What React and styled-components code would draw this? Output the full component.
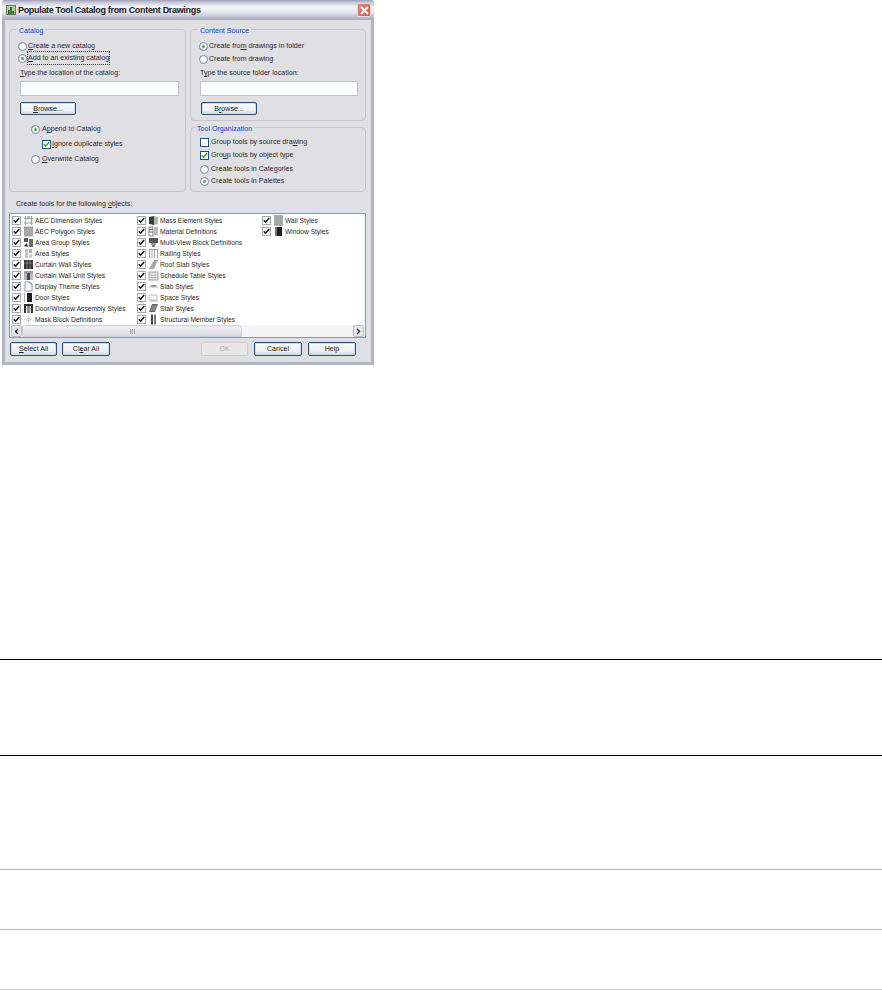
import React from 'react';
import styled, { createGlobalStyle } from 'styled-components';

const GlobalStyle = createGlobalStyle`
  html, body {
    margin: 0;
    padding: 0;
    background: #fff;
  }
`;

const Page = styled.div`
  width: 882px;
  height: 991px;
  overflow: hidden;
  font-family: "Liberation Sans", Arial, sans-serif;
`;

const Dialog = styled.div`
  width: 372px;
  height: 365px;
  margin-left: 2px;
  box-sizing: border-box;
  background: #e0dfe3;
  border: 3px solid #b4b4c8;
  border-top: 0;
  border-radius: 3px 3px 0 0;
  color: #2a2a2a;
  font-size: 7.1px;
  line-height: 12px;
  display: flex;
  flex-direction: column;
`;

const TitleBar = styled.div`
  height: 20px;
  margin: 0 -3px;
  padding: 0 3px 0 2px;
  flex: none;
  display: flex;
  align-items: center;
  gap: 2px;
  border-radius: 3px 3px 0 0;
  background: linear-gradient(#9c9cb8 0, #c4c4d6 10%, #f4f4f8 35%, #e4e4ec 62%, #c0c0d2 85%, #a8a8c0 100%);
`;

const TitleText = styled.span`
  flex: 1;
  font-size: 9px;
  font-weight: bold;
  letter-spacing: -0.32px;
  color: #1c1c1c;
`;

const CloseButton = styled.div`
  width: 14px;
  height: 14px;
  box-sizing: border-box;
  display: flex;
  align-items: center;
  justify-content: center;
  border-radius: 2px;
  border: 1px solid #ecd6d6;
  background: linear-gradient(135deg, #e08d82, #c9574c);
`;

const Body = styled.div`
  flex: 1;
  display: flex;
  flex-direction: column;
  padding: 9px 5px 0 4px;
`;

const Groups = styled.div`
  display: grid;
  grid-template-columns: 177px 176px;
  grid-template-rows: 92px 65px;
  column-gap: 4px;
  row-gap: 6px;
`;

const Group = styled.div`
  position: relative;
  box-sizing: border-box;
  grid-row: ${(p) => p.$span || 'auto'};
  padding: ${(p) => p.$top || 10}px 7px 0 ${(p) => p.$left || 8}px;
  border: 1px solid #c6c5cb;
  border-radius: 4px;
  display: flex;
  flex-direction: column;
`;

const Legend = styled.span`
  position: absolute;
  top: -4px;
  left: ${(p) => p.$left}px;
  padding: 0 2px;
  background: #e0dfe3;
  color: #0a46d8;
  line-height: 10px;
`;

const Option = styled.label`
  height: 12px;
  flex: none;
  display: flex;
  align-items: center;
  gap: ${(p) => p.$gap || 1}px;
  margin-top: ${(p) => p.$mt || 0}px;
  margin-left: ${(p) => p.$indent || 0}px;
`;

const Focused = styled.span`
  outline: 1px dotted #333;
`;

const Radio = styled.span`
  width: 9px;
  height: 9px;
  flex: none;
  box-sizing: border-box;
  border-radius: 50%;
  border: 1px solid #6b88a6;
  background: #fff;
  display: flex;
  align-items: center;
  justify-content: center;
  &::after {
    content: '';
    width: 3px;
    height: 3px;
    border-radius: 50%;
    background: ${(p) => (p.$on ? '#3fae3a' : 'transparent')};
  }
`;

const CheckBox = styled.span`
  width: 9px;
  height: 9px;
  flex: none;
  box-sizing: border-box;
  border: 1px solid ${(p) => (p.$plain ? '#a8a8a8' : '#24527e')};
  background: #fff;
  display: flex;
`;

const FieldLabel = styled.div`
  height: 12px;
  flex: none;
  margin-top: ${(p) => p.$mt || 0}px;
  margin-left: ${(p) => p.$indent || 0}px;
`;

const TextField = styled.div`
  height: 15px;
  flex: none;
  margin-top: 2px;
  margin-left: ${(p) => p.$indent || 0}px;
  margin-right: ${(p) => p.$right || 0}px;
  box-sizing: border-box;
  background: #fff;
  border: 1px solid #b9c3cd;
`;

const Button = styled.div`
  width: ${(p) => p.$w}px;
  height: ${(p) => p.$h || 14}px;
  flex: none;
  box-sizing: border-box;
  margin-top: ${(p) => p.$mt || 0}px;
  margin-left: ${(p) => p.$ml || 0}px;
  border: 1px solid ${(p) => (p.$off ? '#cfcdc8' : '#2a5078')};
  border-radius: 2px;
  background: ${(p) => (p.$off ? '#e8e7e6' : 'linear-gradient(#fbfbfd, #eeeef3 70%, #d2d2de)')};
  box-shadow: ${(p) => (p.$off ? 'none' : 'inset 0 0 0 1px #cfe0f0')};
  color: ${(p) => (p.$off ? '#b0afb0' : '#222')};
  display: flex;
  align-items: center;
  justify-content: center;
`;

const ListLabel = styled.div`
  height: 12px;
  margin: 6px 0 3px 7px;
  flex: none;
`;

const ListBox = styled.div`
  height: 125px;
  flex: none;
  box-sizing: border-box;
  background: #fff;
  border: 1px solid #7f9db9;
  display: flex;
  flex-direction: column;
`;

const Items = styled.div`
  flex: 1;
  display: grid;
  grid-auto-flow: column;
  grid-template-rows: repeat(10, 11px);
  grid-template-columns: repeat(3, 125px);
  padding: 1px 0 0 2px;
`;

const Item = styled.div`
  display: flex;
  align-items: center;
  height: 11px;
  white-space: nowrap;
  line-height: 11px;
  font-size: 6.7px;
`;

const ItemIcon = styled.svg`
  width: 11px;
  height: 11px;
  margin: 0 1px 0 2px;
  flex: none;
`;

const ScrollBar = styled.div`
  height: 12px;
  flex: none;
  margin: 0 1px;
  display: flex;
  background: #f5f5f7;
`;

const ScrollArrow = styled.div`
  width: 11px;
  flex: none;
  box-sizing: border-box;
  border: 1px solid #b8b8c8;
  border-radius: 2px;
  background: #e6e6ee;
  display: flex;
  align-items: center;
  justify-content: center;
`;

const ScrollThumb = styled.div`
  width: ${(p) => p.$w}px;
  flex: none;
  box-sizing: border-box;
  border: 1px solid #cfcfda;
  border-radius: 2px;
  background: linear-gradient(#f0f0f4, #dcdce4);
  display: flex;
  align-items: center;
  justify-content: center;
  gap: 1px;
`;

const ScrollSpace = styled.div`
  flex: 1;
`;

const Grip = styled.span`
  width: 1px;
  height: 5px;
  background: #9a9aa8;
`;

const Footer = styled.div`
  display: flex;
  justify-content: space-between;
  margin-top: 4px;
  padding: 0 10px 0 1px;
`;

const ButtonGroup = styled.div`
  display: flex;
  gap: ${(p) => p.$gap}px;
`;

const AppIcon = styled.svg`
  width: 10px;
  height: 10px;
  margin-left: 2px;
  flex: none;
`;

const RuleRow = styled.div`
  height: ${(p) => p.$h}px;
  box-sizing: border-box;
  border-top: 1px solid ${(p) => p.$color};
  margin-top: ${(p) => p.$mt || 0}px;
`;

const Tick = ({ color }) => (
  <svg width="7" height="7" viewBox="0 0 7 7">
    <path d="M0.8 3.2 L2.6 5.2 L6.2 1" fill="none" stroke={color} strokeWidth="1.5" />
  </svg>
);

const icons = {
  dim: (
    <>
      <path d="M1 3.5h9M2.5 1v9M8.5 1v9M1 8h9" stroke="#8a8a90" strokeWidth="0.8" fill="none" />
      <path d="M4 1h3v2H4z" fill="#b8b8be" />
    </>
  ),
  poly: <rect x="1.5" y="1" width="8" height="9" fill="#a8a8a8" stroke="#8a8a8a" strokeWidth="0.7" />,
  areaGroup: (
    <>
      <rect x="1" y="1" width="4" height="4" fill="#555" />
      <rect x="6" y="2" width="4" height="8" fill="#6b6b6b" />
      <path d="M1 9l3-3 1 4z" fill="#333" />
    </>
  ),
  area: (
    <>
      <rect x="2" y="1" width="3" height="9" fill="#c4c4c4" />
      <rect x="6" y="1" width="3" height="4" fill="#b0b0b0" />
      <rect x="6" y="6" width="3" height="4" fill="#d0d0d0" />
    </>
  ),
  wall: (
    <>
      <rect x="1" y="1" width="9" height="9" fill="#333" />
      <path d="M4 1v9M7 1v9M1 4h9" stroke="#aaa" strokeWidth="0.6" />
    </>
  ),
  wallUnit: (
    <>
      <rect x="1" y="1" width="9" height="3" fill="#a0a0a0" />
      <rect x="1" y="4" width="3" height="6" fill="#b4b4b4" />
      <rect x="4" y="3" width="3" height="7" fill="#4a4a4a" />
      <rect x="7" y="4" width="3" height="6" fill="#bcbcbc" />
    </>
  ),
  theme: (
    <>
      <path d="M2 1h5l2 2v7H2z" fill="#fff" stroke="#5a7fa8" strokeWidth="0.8" />
      <path d="M7 1v2h2" fill="none" stroke="#5a7fa8" strokeWidth="0.6" />
    </>
  ),
  door: (
    <>
      <path d="M1.5 1v9" stroke="#999" strokeWidth="0.8" />
      <rect x="4" y="1" width="5" height="9" fill="#1c1c1c" />
    </>
  ),
  assembly: (
    <>
      <path d="M1 1h9v9h-2V3H3v7H1z" fill="#2e2e2e" />
      <rect x="4" y="3" width="3" height="7" fill="#8a8a8a" />
    </>
  ),
  mask: (
    <>
      <circle cx="5.5" cy="5.5" r="2.5" fill="#dcdcdc" />
      <path d="M5.5 0v11M1 5.5h2M8 5.5h2" stroke="#b0b0b0" strokeWidth="0.7" strokeDasharray="1 1" />
    </>
  ),
  mass: (
    <>
      <path d="M1 2l5-1v9l-5-1z" fill="#3c3c3c" />
      <path d="M6 1l4 1v7l-4 1z" fill="#b4b4b4" />
    </>
  ),
  material: (
    <>
      <rect x="1" y="1" width="4" height="9" fill="none" stroke="#666" strokeWidth="0.8" />
      <path d="M6 2h4M6 4h4M6 6h4M6 8h4M1 3.5h4M1 6h4" stroke="#555" strokeWidth="0.8" />
    </>
  ),
  multi: (
    <>
      <rect x="1" y="1" width="9" height="5" fill="#555" />
      <rect x="3" y="6" width="5" height="2" fill="#999" />
      <rect x="4" y="8" width="3" height="2" fill="#777" />
    </>
  ),
  railing: <path d="M1 1.5h9M1.5 1v9M4 1v9M6.5 1v9M9.5 1v9" stroke="#999" strokeWidth="0.9" fill="none" />,
  roof: <path d="M1 10l5-9h4l-4 9z" fill="#a8a8a8" />,
  schedule: (
    <>
      <rect x="1" y="2" width="9" height="8" fill="#fff" stroke="#777" strokeWidth="0.7" />
      <path d="M1 5h9M4 2v8M7 2v8M1 7.5h9" stroke="#888" strokeWidth="0.6" />
    </>
  ),
  slab: (
    <>
      <path d="M1 5l5-1 4 1-5 1z" fill="#777" />
      <path d="M1 6h9" stroke="#aaa" strokeWidth="0.8" />
    </>
  ),
  space: (
    <>
      <path d="M1 3h8v5H1z" fill="#f4f4f4" stroke="#aaa" strokeWidth="0.7" />
      <path d="M2 9h8" stroke="#999" strokeWidth="0.7" />
    </>
  ),
  stair: (
    <>
      <path d="M1 9l3-8h6l-3 8z" fill="#666" />
      <path d="M2 7h6M3 5h6M3.5 3h6" stroke="#ccc" strokeWidth="0.6" />
    </>
  ),
  member: (
    <>
      <rect x="3" y="0.5" width="2" height="10" fill="#444" />
      <rect x="6" y="0.5" width="2" height="10" fill="#777" />
    </>
  ),
  wallStyle: <rect x="1.5" y="0.5" width="8" height="10" fill="#a6a6a6" stroke="#888" strokeWidth="0.5" />,
  windowStyle: (
    <>
      <rect x="2" y="1" width="2" height="9" fill="#777" />
      <rect x="4" y="1" width="5" height="9" fill="#1e1e1e" />
    </>
  ),
};

const objects = [
  ['dim', 'AEC Dimension Styles'],
  ['poly', 'AEC Polygon Styles'],
  ['areaGroup', 'Area Group Styles'],
  ['area', 'Area Styles'],
  ['wall', 'Curtain Wall Styles'],
  ['wallUnit', 'Curtain Wall Unit Styles'],
  ['theme', 'Display Theme Styles'],
  ['door', 'Door Styles'],
  ['assembly', 'Door/Window Assembly Styles'],
  ['mask', 'Mask Block Definitions'],
  ['mass', 'Mass Element Styles'],
  ['material', 'Material Definitions'],
  ['multi', 'Multi-View Block Definitions'],
  ['railing', 'Railing Styles'],
  ['roof', 'Roof Slab Styles'],
  ['schedule', 'Schedule Table Styles'],
  ['slab', 'Slab Styles'],
  ['space', 'Space Styles'],
  ['stair', 'Stair Styles'],
  ['member', 'Structural Member Styles'],
  ['wallStyle', 'Wall Styles'],
  ['windowStyle', 'Window Styles'],
];

export default function App() {
  return (
    <Page>
      <GlobalStyle />
      <Dialog>
        <TitleBar>
          <AppIcon viewBox="0 0 10 10">
            <rect width="10" height="10" fill="#4f8a48" />
            <rect x="1" y="1" width="8" height="8" fill="#b4cf9c" />
            <path d="M2 9V5h1.5v4zM4.2 9V2h1.5v7zM6.5 9V6H8v3z" fill="#26482a" />
          </AppIcon>
          <TitleText>Populate Tool Catalog from Content Drawings</TitleText>
          <CloseButton>
            <svg width="9" height="9" viewBox="0 0 9 9">
              <path d="M1 1l7 7M8 1L1 8" stroke="#fff" strokeWidth="2" />
            </svg>
          </CloseButton>
        </TitleBar>
        <Body>
          <Groups>
            <Group $span="1 / span 2">
              <Legend $left={7}>Catalog</Legend>
              <Option><Radio /><span><u>C</u>reate a new catalog</span></Option>
              <Option><Radio $on /><Focused><u>A</u>dd to an existing catalog</Focused></Option>
              <FieldLabel $mt={3} $indent={2}><u>T</u>ype the location of the catalog:</FieldLabel>
              <TextField $indent={2} $right={-1} />
              <Button $w={56} $h={13} $mt={6} $ml={2}><span><u>B</u>rowse...</span></Button>
              <Option $mt={8} $indent={13} $gap={2}><Radio $on /><span>A<u>p</u>pend to Catalog</span></Option>
              <Option $mt={3} $indent={24}><CheckBox><Tick color="#3aa535" /></CheckBox><span><u>I</u>gnore duplicate styles</span></Option>
              <Option $mt={3} $indent={13} $gap={2}><Radio /><span><u>O</u>verwrite Catalog</span></Option>
            </Group>
            <Group>
              <Legend $left={7}>Content Source</Legend>
              <Option><Radio $on /><span>Create fro<u>m</u> drawings in folder</span></Option>
              <Option $mt={1}><Radio /><span>Create from drawing</span></Option>
              <FieldLabel $mt={2} $indent={1}>T<u>y</u>pe the source folder location:</FieldLabel>
              <TextField $indent={1} />
              <Button $w={56} $h={13} $mt={6} $ml={2}><span>B<u>r</u>owse...</span></Button>
            </Group>
            <Group $top={8} $left={9}>
              <Legend $left={4}>Tool Organization</Legend>
              <Option $gap={2}><CheckBox /><span>Group tools by source dra<u>w</u>ing</span></Option>
              <Option $mt={1} $gap={2}><CheckBox><Tick color="#3aa535" /></CheckBox><span>Gro<u>u</u>p tools by object type</span></Option>
              <Option $mt={2} $gap={2}><Radio /><span>Create tools in Categories</span></Option>
              <Option $gap={2}><Radio $on /><span>Create tools in Palettes</span></Option>
            </Group>
          </Groups>
          <ListLabel>Create tools for the following <u>o</u>bjects:</ListLabel>
          <ListBox>
            <Items>
              {objects.map(([icon, name]) => (
                <Item key={name}>
                  <CheckBox $plain><Tick color="#111" /></CheckBox>
                  <ItemIcon viewBox="0 0 11 11">{icons[icon]}</ItemIcon>
                  <span>{name}</span>
                </Item>
              ))}
            </Items>
            <ScrollBar>
              <ScrollArrow>
                <svg width="5" height="7" viewBox="0 0 5 7"><path d="M4 1L1.5 3.5 4 6" fill="none" stroke="#222" strokeWidth="1.4" /></svg>
              </ScrollArrow>
              <ScrollThumb $w={220}><Grip /><Grip /><Grip /></ScrollThumb>
              <ScrollSpace />
              <ScrollArrow>
                <svg width="5" height="7" viewBox="0 0 5 7"><path d="M1 1l2.5 2.5L1 6" fill="none" stroke="#222" strokeWidth="1.4" /></svg>
              </ScrollArrow>
            </ScrollBar>
          </ListBox>
          <Footer>
            <ButtonGroup $gap={5}>
              <Button $w={47}><span><u>S</u>elect All</span></Button>
              <Button $w={48}><span>Cl<u>e</u>ar All</span></Button>
            </ButtonGroup>
            <ButtonGroup $gap={6}>
              <Button $w={47} $off>OK</Button>
              <Button $w={48}>Cancel</Button>
              <Button $w={48}>Help</Button>
            </ButtonGroup>
          </Footer>
        </Body>
      </Dialog>
      <RuleRow $h={96} $mt={294} $color="#000" />
      <RuleRow $h={114} $color="#000" />
      <RuleRow $h={60} $color="#b5b5b5" />
      <RuleRow $h={60} $color="#b5b5b5" />
      <RuleRow $h={2} $color="#d0d0d0" />
    </Page>
  );
}
